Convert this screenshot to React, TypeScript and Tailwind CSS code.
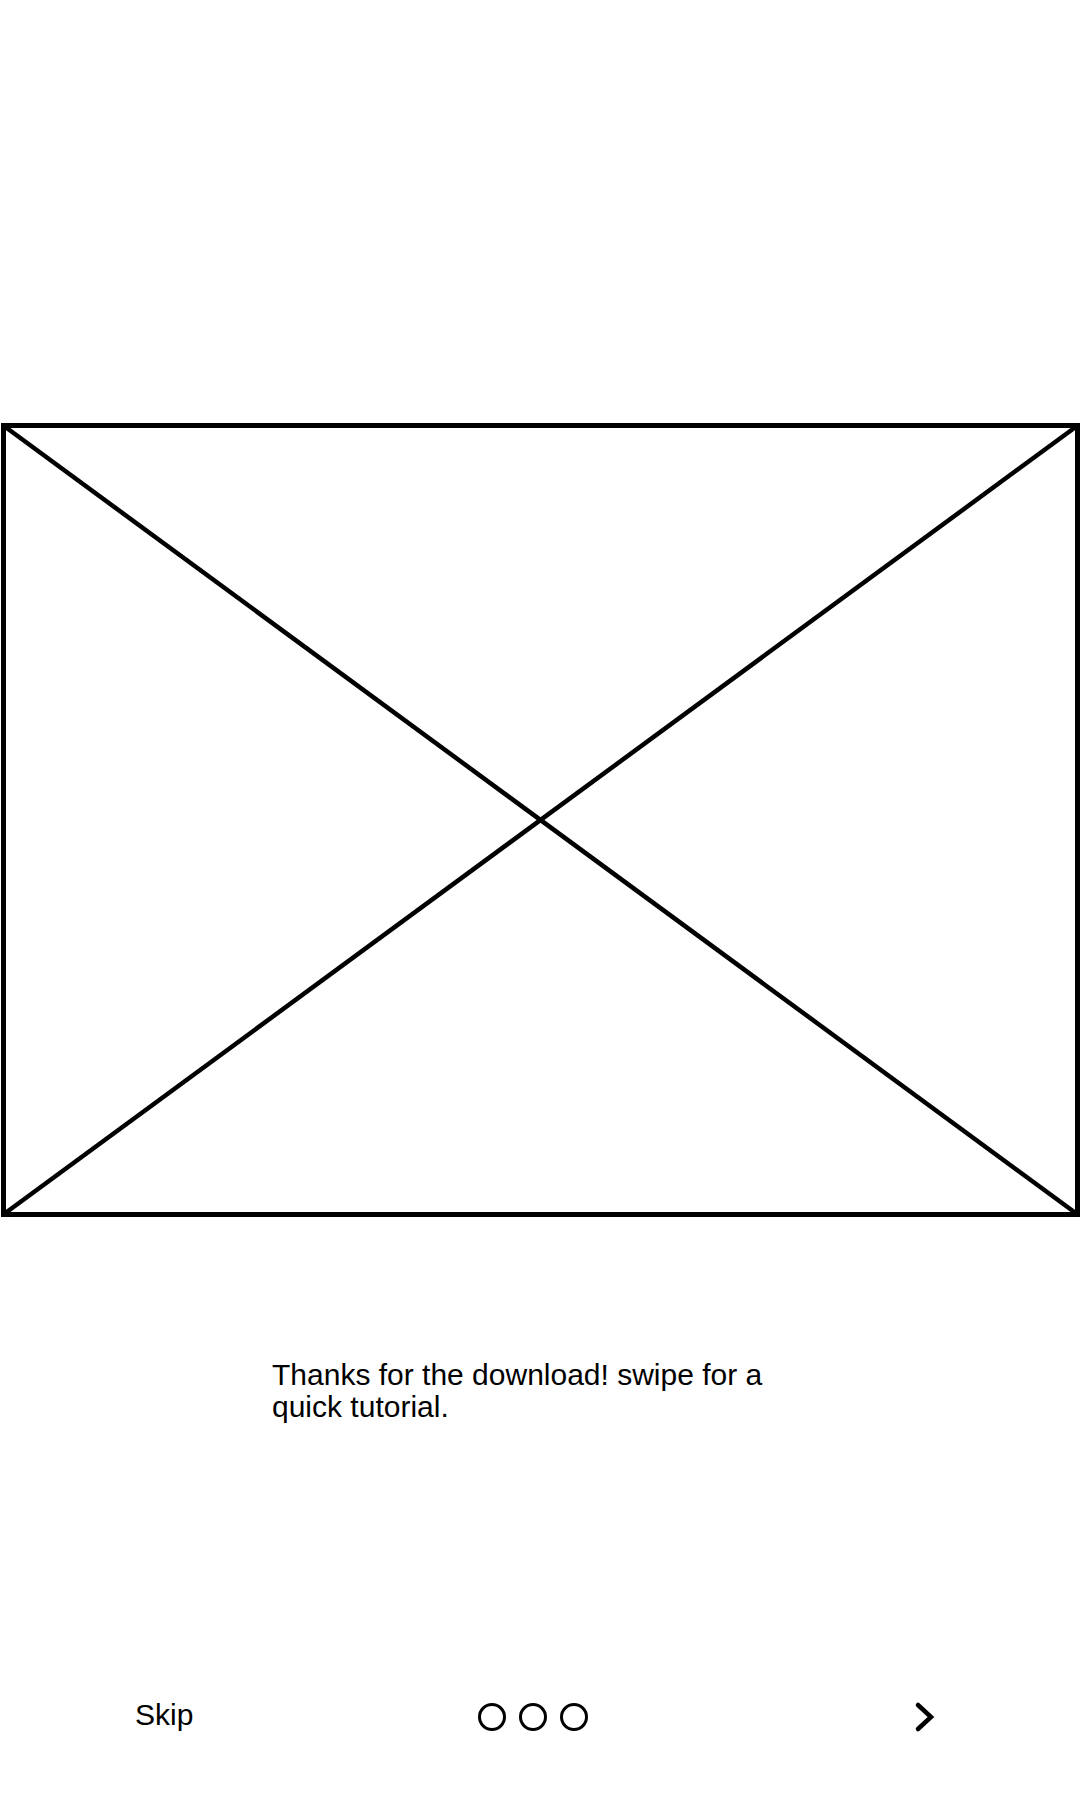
export default function App() {
  return (
    <div
      className="w-[1080px] h-[1800px] bg-white flex flex-col text-black"
      style={{ fontFamily: '"Liberation Sans", Arial, sans-serif' }}
    >
      <div className="h-[423px]" />
      <div className="relative ml-[1px] w-[1079px] h-[794px] border-[5px] border-black">
        <svg
          className="absolute left-[-5px] top-[-5px]"
          width="1079"
          height="794"
          viewBox="0 0 1079 794"
        >
          <line x1="3" y1="3" x2="1076" y2="791" stroke="black" strokeWidth="4.5" />
          <line x1="1076" y1="3" x2="3" y2="791" stroke="black" strokeWidth="4.5" />
        </svg>
      </div>
      <p className="mt-[142px] ml-[272px] w-[520px] text-[30px] leading-[32px]">
        Thanks for the download! swipe for a quick tutorial.
      </p>
      <div className="mt-[275px] flex items-start">
        <div className="w-[478px] pl-[135px] pt-[1px] text-[30px] leading-[32px]">Skip</div>
        <div className="mt-[5px] flex gap-[13px]">
          <div className="w-[28px] h-[28px] rounded-full border-[3px] border-black" />
          <div className="w-[28px] h-[28px] rounded-full border-[3px] border-black" />
          <div className="w-[28px] h-[28px] rounded-full border-[3px] border-black" />
        </div>
        <svg className="ml-[325px] mt-[2px]" width="24" height="34" viewBox="0 0 24 34">
          <polyline
            points="5,5 18,17 5,29"
            fill="none"
            stroke="black"
            strokeWidth="4.5"
            strokeLinecap="round"
            strokeLinejoin="miter"
          />
        </svg>
      </div>
    </div>
  );
}
